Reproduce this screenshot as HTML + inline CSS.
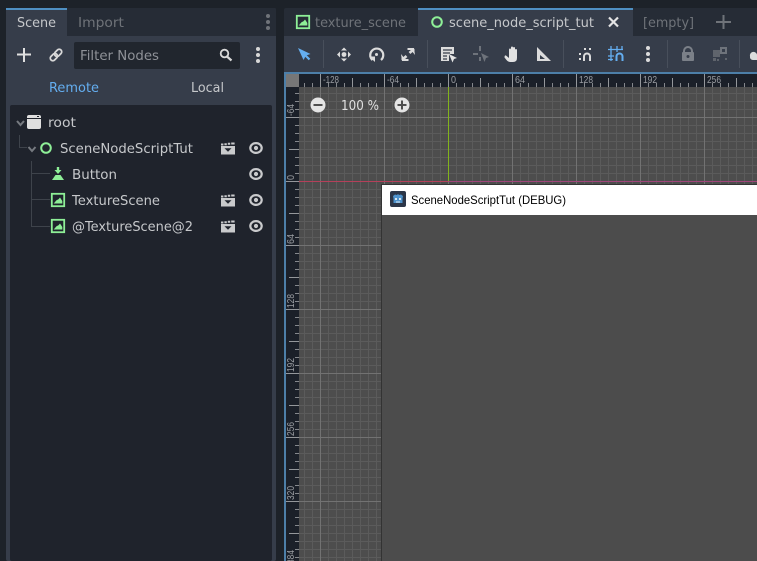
<!DOCTYPE html>
<html><head><meta charset="utf-8"><style>
html,body{margin:0;padding:0;background:#1d2229;overflow:hidden}
svg{display:block}
text{font-family:"DejaVu Sans","Liberation Sans",sans-serif;font-size:13.5px;fill:#c6c8cb}
text.r{font-family:"Liberation Sans",sans-serif;font-size:10px;fill:#9a9da2}
</style></head><body>
<svg width="757" height="561" viewBox="0 0 757 561" xmlns="http://www.w3.org/2000/svg">
<defs>
<pattern id="minor" x="3" y="5" width="8" height="8" patternUnits="userSpaceOnUse"><path d="M5.500 0V8M0 .5H8" stroke="#5b5b5b" stroke-width="1" fill="none"/></pattern>
<pattern id="major" x="0" y="53" width="64" height="64" patternUnits="userSpaceOnUse"><path d="M0.5 0V64M0 .5H64" stroke="#727272" stroke-width="1" fill="none"/></pattern>
<pattern id="tx" x="0" y="74" width="8" height="13" patternUnits="userSpaceOnUse"><rect x="0" y="9" width="1" height="4" fill="#85888d"/></pattern>
<pattern id="ty" x="285" y="5" width="14" height="8" patternUnits="userSpaceOnUse"><rect x="10" y="0" width="4" height="1" fill="#85888d"/></pattern>
<g id="eye"><ellipse cx="0" cy="0" rx="5.700" ry="4.900" fill="none" stroke="#c9cacc" stroke-width="2.200"/><circle cx="0" cy="0" r="2.100" fill="#c9cacc"/></g>
<g id="clap"><path d="M-7-5.500h2.400v2h-2.400zM-3.600-5.800h2.400v2h-2.400zM-.2-6.200h2.400v2h-2.400zM3.200-6.500h3.400v2h-3.400z" fill="#c9cacc"/><path d="M-7-3H7V5.500H-7z" fill="#c9cacc"/><path d="M-3.500-.7H3.500L0 2.800z" fill="#1f232c"/></g>
<g id="img"><rect x="-6.200" y="-6.200" width="12.400" height="12.400" fill="none" stroke="#8eef97" stroke-width="1.800"/><path d="M-4.300 3.500-1.500 .2 .5-.7 2-2.500 4.300 1V3.500z" fill="#8eef97"/></g>
</defs>

<rect width="757" height="561" fill="#1d2229"/>

<!-- left dock -->
<rect x="6" y="8" width="270" height="553" rx="2" fill="#363d4a"/>
<path d="M67 8H274a2 2 0 0 1 2 2V36H67z" fill="#262c36"/>
<rect x="6" y="8" width="61" height="2" fill="#4f8fc2"/>
<text x="17" y="27" textLength="39" lengthAdjust="spacingAndGlyphs">Scene</text>
<text x="78" y="27" textLength="46" lengthAdjust="spacingAndGlyphs" style="fill:#6f7379">Import</text>
<g fill="#6f7379"><circle cx="268" cy="16" r="2"/><circle cx="268" cy="22" r="2"/><circle cx="268" cy="28" r="2"/></g>

<path d="M17 54.500H31M24 48V62" stroke="#e0e0e0" stroke-width="2" fill="none"/>
<g transform="rotate(-45 56 55)" fill="none" stroke="#d8d8d8" stroke-width="1.800"><rect x="49" y="52.500" width="8" height="5" rx="2.500"/><rect x="55" y="52.500" width="8" height="5" rx="2.500"/></g>
<rect x="74" y="42" width="166" height="27" rx="2" fill="#21262e"/>
<text x="80" y="60" textLength="79" lengthAdjust="spacingAndGlyphs" style="fill:#8f9298">Filter Nodes</text>
<circle cx="224.500" cy="53.500" r="3.800" fill="none" stroke="#d8d8d8" stroke-width="1.800"/><path d="M227 56.500 231.500 60.500" stroke="#d8d8d8" stroke-width="2.200"/>
<g fill="#d8d8d8"><circle cx="258" cy="49" r="2"/><circle cx="258" cy="55" r="2"/><circle cx="258" cy="61" r="2"/></g>

<text x="49" y="92" textLength="50" lengthAdjust="spacingAndGlyphs" style="fill:#64aef0">Remote</text>
<text x="191" y="92" textLength="33" lengthAdjust="spacingAndGlyphs">Local</text>

<rect x="10" y="105" width="262" height="456" rx="2" fill="#1f232c"/>

<!-- tree lines -->
<path d="M19.500 135V147.500H27M31.500 161V226.500H50M31.500 173.500H50M31.500 199.500H50" stroke="#3e434b" fill="none"/>
<path d="M17 121 20.500 125 24 121M28.500 147 32 151 35.500 147" fill="none" stroke="#767a80" stroke-width="2"/>

<!-- root icon -->
<path d="M27 117a2 2 0 0 1 2-2H39a2 2 0 0 1 2 2v1H27z" fill="#dfdfdf"/><rect x="37" y="116" width="2" height="1" fill="#1f232c"/><path d="M27 119H41V127a2 2 0 0 1-2 2H29a2 2 0 0 1-2-2z" fill="#dfdfdf"/>
<text x="48" y="127" textLength="28" lengthAdjust="spacingAndGlyphs">root</text>

<circle cx="46" cy="148" r="4.800" fill="none" stroke="#8eef97" stroke-width="2"/>
<text x="60" y="153" textLength="133" lengthAdjust="spacingAndGlyphs">SceneNodeScriptTut</text>
<use href="#clap" x="228" y="149"/><use href="#eye" x="256" y="148"/>

<path d="M58 167V171" stroke="#8eef97" stroke-width="2.400"/><path d="M54.500 170H61.500L58 174z" fill="#8eef97"/><path d="M52 180 55.500 175H60.500L64 180z" fill="#8eef97"/>
<text x="72" y="179" textLength="45" lengthAdjust="spacingAndGlyphs">Button</text>
<use href="#eye" x="256" y="174"/>

<use href="#img" x="58" y="200"/>
<text x="72" y="205" textLength="88" lengthAdjust="spacingAndGlyphs">TextureScene</text>
<use href="#clap" x="228" y="201"/><use href="#eye" x="256" y="200"/>

<use href="#img" x="58" y="226"/>
<text x="72" y="231" textLength="121" lengthAdjust="spacingAndGlyphs">@TextureScene@2</text>
<use href="#clap" x="228" y="227"/><use href="#eye" x="256" y="226"/>

<!-- right top tabs -->
<path d="M284 10a2 2 0 0 1 2-2H757V36H284z" fill="#262c36"/>
<rect x="418" y="8" width="215" height="28" fill="#363d4a"/>
<rect x="418" y="8" width="215" height="2" fill="#4f8fc2"/>
<use href="#img" x="303" y="22"/>
<text x="315" y="27" textLength="91" lengthAdjust="spacingAndGlyphs" style="fill:#6f7379">texture_scene</text>
<circle cx="437" cy="22" r="4.800" fill="none" stroke="#8eef97" stroke-width="2"/>
<text x="449" y="27" textLength="145" lengthAdjust="spacingAndGlyphs">scene_node_script_tut</text>
<path d="M609 17.500 618 26.500M618 17.500 609 26.500" stroke="#e4e4e4" stroke-width="2.200"/>
<text x="643" y="27" textLength="51" lengthAdjust="spacingAndGlyphs" style="fill:#6f7379">[empty]</text>
<path d="M716 22H731M723.500 15V29" stroke="#6f7379" stroke-width="2"/>

<!-- toolbar -->
<rect x="284" y="36" width="473" height="36" fill="#363d4a"/>
<g stroke="#484f5b"><path d="M323.500 40V68M427.500 40V68M563.500 40V68M667.500 40V68M739.500 40V68"/></g>

<path d="M298 48 310.500 54 306 55.500 303.500 60z" fill="#64aef0"/><path d="M305 55 309.500 59.500" stroke="#64aef0" stroke-width="2.200"/>
<g fill="#dcdcdc"><path d="M344 47.500 347 50.500H341zM344 61.500 341 58.500H347zM337 54.500 340 51.500V57.500zM351 54.500 348 51.500V57.500z"/><circle cx="344" cy="54.500" r="2.400"/></g>
<path d="M372.500 60A6.500 6.500 0 1 1 381 60" fill="none" stroke="#dcdcdc" stroke-width="2.200"/><circle cx="376.500" cy="54.500" r="1.500" fill="#dcdcdc"/><path d="M369 56.500H375V62z" fill="#dcdcdc"/>
<path d="M401 54 402 61 408.500 61 408.500 59 405 59zM415 55 414 48 407.500 48 407.500 50 411 50z" fill="#dcdcdc"/><path d="M402 60 406.500 56M409.500 53 414 49" stroke="#dcdcdc" stroke-width="2.600"/>

<path d="M441 47H454V54H450L449 55V61H441z" fill="#dcdcdc"/><path d="M443 50H452M443 53H450M443 56H447M443 59H447" stroke="#363d4a" stroke-width="1.200"/><path d="M449 54 457 58 454 59 452.500 62.500z" fill="#e5e5e5"/>
<g fill="#6e737b"><rect x="479" y="46" width="2" height="5"/><rect x="473" y="53" width="5" height="2"/><path d="M481 53 489 57 486 58 484.500 62z"/><rect x="479" y="57" width="2" height="4"/></g>
<path d="M506 55.500 509 58V49.500a1 1 0 0 1 2 0V54V47.500a1 1 0 0 1 2 0V54V48a1 1 0 0 1 2 0V54V50a1 1 0 0 1 2 0V58Q517 62 513 62H510Q508 62 506.500 60L504.500 57.500Q504.500 55 506 55.500z" fill="#e2e2e2"/>
<path d="M537 47 551 61H537z" fill="#dcdcdc"/><path d="M540 55 545 59H540z" fill="#363d4a"/>

<g fill="#dcdcdc"><rect x="579" y="53" width="2" height="2"/><rect x="579" y="58" width="2" height="2"/><rect x="584" y="48" width="2" height="2"/><rect x="589" y="48" width="2" height="2"/></g>
<path d="M584 61V56.500a3 3 0 0 1 6 0V61" fill="none" stroke="#dcdcdc" stroke-width="2"/>
<g stroke="#64aef0" stroke-width="1.300" fill="none"><path d="M611 46V61M617 46V52M622 46V50M608 49.500H623M608 56H614M608 59.500H613"/><path d="M616.500 61V56.500a3 3 0 0 1 6 0V61" stroke-width="2"/></g>
<g fill="#dcdcdc"><circle cx="648" cy="48" r="2"/><circle cx="648" cy="54" r="2"/><circle cx="648" cy="60" r="2"/></g>
<path d="M684 52V51a4 4 0 0 1 8 0V52" fill="none" stroke="#7b8088" stroke-width="2"/><rect x="682" y="52" width="12" height="9" rx="1" fill="#7b8088"/><circle cx="688" cy="56.500" r="1.500" fill="#363d4a"/>
<g fill="#5f646c"><rect x="713" y="50" width="7" height="7"/><rect x="713" y="58" width="3" height="3"/><rect x="725" y="58" width="2" height="2"/><rect x="717" y="59" width="2" height="2"/></g><rect x="720" y="47" width="7" height="7" fill="#6e737b"/><rect x="722" y="49" width="3" height="3" fill="#363d4a"/>
<path d="M750 56.500a3.500 3.500 0 0 1 7-2V60H753a3 3 0 0 1-3-3.500z" fill="#dcdcdc"/>

<!-- blue line -->
<rect x="284" y="72" width="473" height="2" fill="#4d7fa8"/>
<rect x="284" y="72" width="2" height="489" fill="#4d7fa8"/>

<!-- rulers -->
<rect x="286" y="74" width="471" height="13" fill="#1b2029"/>
<rect x="286" y="87" width="13" height="474" fill="#1b2029"/>
<rect x="299" y="74" width="458" height="13" fill="url(#tx)"/>
<rect x="286" y="87" width="13" height="474" fill="url(#ty)"/>
<g fill="#94979b">
<rect x="352" y="78" width="1" height="9"/><rect x="416" y="78" width="1" height="9"/><rect x="480" y="78" width="1" height="9"/><rect x="544" y="78" width="1" height="9"/><rect x="608" y="78" width="1" height="9"/><rect x="672" y="78" width="1" height="9"/><rect x="736" y="78" width="1" height="9"/>
<rect x="320" y="74" width="1" height="13"/><rect x="384" y="74" width="1" height="13"/><rect x="448" y="74" width="1" height="13"/><rect x="512" y="74" width="1" height="13"/><rect x="576" y="74" width="1" height="13"/><rect x="640" y="74" width="1" height="13"/><rect x="704" y="74" width="1" height="13"/>
<rect x="289" y="149" width="10" height="1"/><rect x="289" y="213" width="10" height="1"/><rect x="289" y="277" width="10" height="1"/><rect x="289" y="341" width="10" height="1"/><rect x="289" y="405" width="10" height="1"/><rect x="289" y="469" width="10" height="1"/><rect x="289" y="533" width="10" height="1"/>
<rect x="286" y="117" width="13" height="1"/><rect x="286" y="181" width="13" height="1"/><rect x="286" y="245" width="13" height="1"/><rect x="286" y="309" width="13" height="1"/><rect x="286" y="373" width="13" height="1"/><rect x="286" y="437" width="13" height="1"/><rect x="286" y="501" width="13" height="1"/>
</g>
<rect x="286" y="74" width="13" height="13" fill="#777"/>
<text class="r" x="323" y="83" textLength="16" lengthAdjust="spacingAndGlyphs">-128</text>
<text class="r" x="387" y="83" textLength="12" lengthAdjust="spacingAndGlyphs">-64</text>
<text class="r" x="451" y="83" textLength="5" lengthAdjust="spacingAndGlyphs">0</text>
<text class="r" x="515" y="83" textLength="10" lengthAdjust="spacingAndGlyphs">64</text>
<text class="r" x="579" y="83" textLength="14" lengthAdjust="spacingAndGlyphs">128</text>
<text class="r" x="643" y="83" textLength="14" lengthAdjust="spacingAndGlyphs">192</text>
<text class="r" x="707" y="83" textLength="14" lengthAdjust="spacingAndGlyphs">256</text>
<text class="r" transform="translate(294,116) rotate(-90)" textLength="12" lengthAdjust="spacingAndGlyphs">-64</text>
<text class="r" transform="translate(294,180) rotate(-90)" textLength="5" lengthAdjust="spacingAndGlyphs">0</text>
<text class="r" transform="translate(294,244) rotate(-90)" textLength="10" lengthAdjust="spacingAndGlyphs">64</text>
<text class="r" transform="translate(294,308) rotate(-90)" textLength="14" lengthAdjust="spacingAndGlyphs">128</text>
<text class="r" transform="translate(294,372) rotate(-90)" textLength="14" lengthAdjust="spacingAndGlyphs">192</text>
<text class="r" transform="translate(294,436) rotate(-90)" textLength="14" lengthAdjust="spacingAndGlyphs">256</text>
<text class="r" transform="translate(294,500) rotate(-90)" textLength="14" lengthAdjust="spacingAndGlyphs">320</text>
<text class="r" transform="translate(294,564) rotate(-90)" textLength="14" lengthAdjust="spacingAndGlyphs">384</text>

<!-- viewport -->
<rect x="299" y="87" width="458" height="474" fill="#4d4d4d"/>
<rect x="299" y="87" width="458" height="474" fill="url(#minor)"/>
<rect x="299" y="87" width="458" height="474" fill="url(#major)"/>
<rect x="448" y="87" width="1" height="94" fill="#82b31b"/>
<rect x="299" y="181" width="149" height="1" fill="#b5405a"/>
<rect x="448" y="181" width="309" height="1" fill="#a0457a"/>

<!-- zoom widget -->
<circle cx="318" cy="105" r="7.500" fill="#e4e4e4"/><rect x="313.500" y="104" width="9" height="2" fill="#4d4d4d"/>
<text x="341" y="110" textLength="38" lengthAdjust="spacingAndGlyphs" style="fill:#e0e0e0">100 %</text>
<circle cx="402" cy="105" r="7.500" fill="#e4e4e4"/><path d="M397.500 105H406.500M402 100.500V109.500" stroke="#4d4d4d" stroke-width="2"/>

<!-- debug window -->
<rect x="381" y="184" width="376" height="377" fill="#333"/>
<rect x="382" y="185" width="375" height="30" fill="#fff"/>
<rect x="382" y="215" width="375" height="346" fill="#4c4c4c"/>
<rect x="390" y="191" width="16" height="16" rx="2" fill="#2c3648"/>
<path d="M393 196 395 194.500 397 195 398 194 399 195 401 194.500 403 196 402.500 198.500V203H393.500V198.500z" fill="#4f93cc"/><rect x="395" y="198" width="2" height="2" fill="#dbe8f2"/><rect x="399" y="198" width="2" height="2" fill="#dbe8f2"/><rect x="396" y="201.500" width="4" height="1" fill="#dbe8f2"/>
<text x="411" y="204" textLength="155" lengthAdjust="spacingAndGlyphs" style="font-family:'Liberation Sans',sans-serif;font-size:12px;fill:#000">SceneNodeScriptTut (DEBUG)</text>
</svg>
</body></html>
